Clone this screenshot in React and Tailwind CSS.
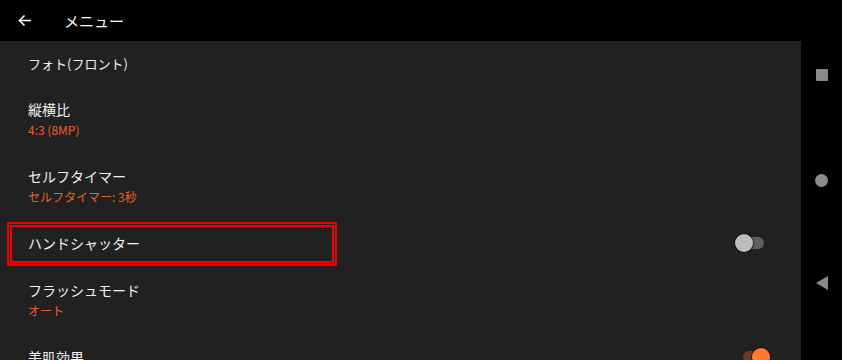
import React from "react";

const font = { fontFamily: '"Noto Sans CJK JP", "Noto Sans", sans-serif' };

function Toggle({ on }) {
  return (
    <div className="relative w-[35px] h-[18px] shrink-0">
      <div
        className={
          "absolute left-[8px] top-[3px] w-[21px] h-[12px] rounded-full " +
          (on ? "bg-[#6e3a20]" : "bg-[#5e5e5e]")
        }
      />
      <div
        className={
          "absolute top-0 w-[18px] h-[18px] rounded-full shadow-[0_0_0_1px_rgba(0,0,0,0.6)] " +
          (on ? "left-[17px] bg-[#ff7a30]" : "left-0 bg-[#bdbdbd]")
        }
      />
    </div>
  );
}

function Row({ title, sub, toggle, highlight }) {
  return (
    <div className="relative flex items-start justify-between pl-[28px] pr-[31px] pt-[12px] pb-[15px]">
      <div className="flex flex-col gap-[2px]">
        <div className="text-[14px] leading-[20px] text-[#f1f1f1]">{title}</div>
        {sub && (
          <div className="text-[12px] leading-[18px] text-[#e8622c]">{sub}</div>
        )}
      </div>
      {toggle !== undefined && (
        <div className="pt-[1px]">
          <Toggle on={toggle} />
        </div>
      )}
      {highlight && (
        <div className="absolute left-[7px] top-[1px] w-[330px] h-[44px] border-2 border-[#f00000] p-[1px]">
          <div className="w-full h-full border-2 border-[#f00000]" />
        </div>
      )}
    </div>
  );
}

export default function App() {
  return (
    <div className="w-[842px] h-[360px] overflow-hidden flex bg-black" style={font}>
      <div className="flex-1 flex flex-col">
        <div className="h-[41px] bg-black flex items-center shrink-0">
          <div className="w-[64px] flex items-center pl-[16px]">
            <svg width="17" height="17" viewBox="0 0 24 24" fill="none" stroke="#ffffff" strokeWidth="2.2" strokeLinecap="square">
              <path d="M20 12H5" />
              <path d="M12 5l-7 7 7 7" strokeLinecap="butt" />
            </svg>
          </div>
          <div className="text-[15px] text-white leading-[20px]">メニュー</div>
        </div>
        <div className="flex-1 bg-[#212121] flex flex-col overflow-hidden">
          <div className="pl-[28px] pt-[13px] pb-[13px] text-[13px] leading-[20px] text-[#eeeeee]">
            フォト(フロント)
          </div>
          <Row title="縦横比" sub="4:3 (8MP)" />
          <Row title="セルフタイマー" sub="セルフタイマー: 3秒" />
          <Row title="ハンドシャッター" toggle={false} highlight />
          <Row title="フラッシュモード" sub="オート" />
          <Row title="美肌効果" toggle={true} />
        </div>
      </div>
      <div className="w-[41px] bg-black flex flex-col items-center">
        <div className="mt-[69px] w-[12px] h-[12px] bg-[#8a8a8a] rounded-[1px]" />
        <div className="mt-[93px] w-[13px] h-[13px] bg-[#8a8a8a] rounded-full" />
        <svg className="mt-[89px]" width="12" height="14" viewBox="0 0 12 14">
          <polygon points="12,0 12,14 0,7" fill="#8a8a8a" />
        </svg>
      </div>
    </div>
  );
}
